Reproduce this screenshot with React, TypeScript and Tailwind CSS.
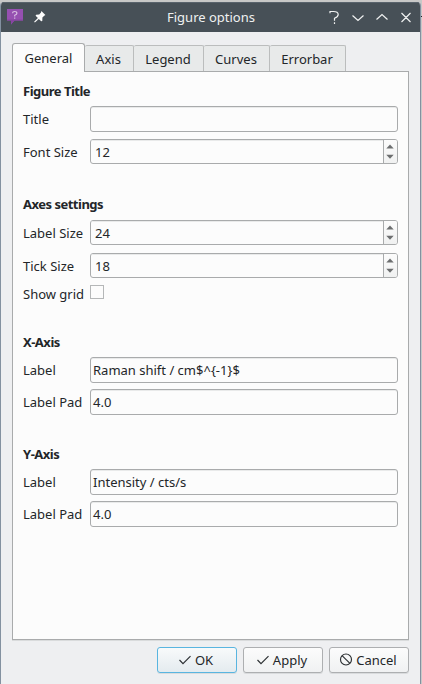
import React from 'react';

function Tab({ label, className }: { label: string; className: string }) {
  return (
    <div
      className={`flex h-[26px] items-center justify-center rounded-t-[2px] border-t border-r border-[#bbbdbd] bg-[#e8eaea] ${className}`}
    >
      {label}
    </div>
  );
}

function Heading({ children, className }: { children: string; className: string }) {
  return <h2 className={`h-[18px] leading-[18px] font-bold tracking-[-0.5px] ${className}`}>{children}</h2>;
}

function TextRow({ label, value, className }: { label: string; value: string; className: string }) {
  return (
    <div className={`flex h-[26px] items-center ${className}`}>
      <span className="w-[67px] shrink-0">{label}</span>
      <div className="flex h-full flex-1 items-center rounded-[3px] border border-[#a9abac] pl-[2px] shadow-[inset_0_1px_0_#e9eaea]">
        {value}
      </div>
    </div>
  );
}

function SpinRow({ label, value, className }: { label: string; value: string; className: string }) {
  return (
    <div className={`flex h-[25px] items-center ${className}`}>
      <span className="w-[67px] shrink-0">{label}</span>
      <div className="flex h-full flex-1 overflow-hidden rounded-[3px] border border-[#a9abac]">
        <div className="flex flex-1 items-center pl-[4px] shadow-[inset_0_1px_0_#e9eaea]">{value}</div>
        <div className="w-[14px] border-l border-[#a9abac] bg-linear-to-b from-[#fcfcfc] to-[#f0f1f1]">
          <svg width="13" height="23" viewBox="0 0 13 23" fill="#6c6e6f">
            <path d="M2.3 8.5 L6 4.6 L9.7 8.5Z" />
            <path d="M2.3 14.8 L6 18.7 L9.7 14.8Z" />
          </svg>
        </div>
      </div>
    </div>
  );
}

function Check() {
  return (
    <svg width="14" height="12" viewBox="0 0 14 12" fill="none" stroke="#2b2f32" strokeWidth="1.15">
      <path d="M1.5 6 L5 9.7 L12.5 2.2" />
    </svg>
  );
}

function Button({ label, icon, className }: { label: string; icon: React.ReactNode; className: string }) {
  return (
    <button
      className={`flex h-[26px] w-[80px] items-center justify-center gap-[3px] rounded-[3px] border bg-linear-to-b shadow-[0_1px_0_#d9dbdd] ${className}`}
    >
      {icon}
      <span>{label}</span>
    </button>
  );
}

export default function App() {
  return (
    <div className="h-[684px] w-[422px] overflow-hidden bg-[#c8c8c7] pt-[2px] font-['Noto_Sans',sans-serif] text-[13px] leading-[18px] text-[#232629]">
      <div className="flex h-[682px] w-[421px] flex-col overflow-hidden rounded-t-[4px] border-x border-[#8391a0] bg-[#eeeff1]">
        <header className="flex h-[30px] shrink-0 items-center border-t border-[#59636c] bg-[#475057] text-[#eff0f1]">
          <svg className="ml-[6px] shrink-0" width="17" height="17" viewBox="0 0 17 17">
            <path d="M0 0H16V11.500H7.500L4 15.500V11.500H0Z" fill="#9650b1" />
            <path d="M0 10.500H16V11.500H7.500L4 15.500V11.500H0Z" fill="#8744a2" />
            <path d="M5.500 4.200Q5.600 2.500 7.600 2.500Q9.900 2.500 9.900 4.300Q9.900 5.500 7.700 6.300V7.500M7.700 8.500V9.700" fill="none" stroke="#d6bce0" strokeWidth="1.2" />
          </svg>
          <svg className="ml-[10px] shrink-0" width="13" height="13" viewBox="0 0 13 13" fill="#fcfcfc">
            <path d="M7.400 0 L11.400 4 L10.200 4.800 L8.400 6.600 L8.300 9.900 L7.200 10.200 L4.800 7.900 L.9 11.600 L.1 10.800 L3.900 7 L1.600 4.800 L2.100 3.700 L5.200 3.600 L7 1.600Z" />
          </svg>
          <h1 className="ml-[120px] w-[100px] pb-[2px] whitespace-nowrap">Figure options</h1>
          <svg className="ml-[60px] shrink-0" width="88" height="16" viewBox="0 0 88 16" fill="none" stroke="#f0f1f1" strokeWidth="1.2">
            <path d="M3 3.2V1.500H6.500Q11.200 1.500 11.200 4.500Q11.200 6.800 7.500 8.200V10.800M7.500 12.300V14" />
            <path d="M25.5 5.500L31 10.500L36.500 5.500M49.500 9.500L55 4.500L60.500 9.500M74.500 3L83.500 12M83.500 3L74.500 12" />
          </svg>
        </header>

        <main className="flex flex-1 flex-col px-[11px]">
          <nav className="z-10 mt-[11px] -mb-px flex h-[29px] shrink-0 items-end">
            <div className="flex h-[29px] w-[73px] items-center justify-center rounded-t-[3px] border border-b-0 border-[#a9abac] bg-[#fcfcfc]">
              General
            </div>
            <Tab label="Axis" className="mb-px w-[49px] pr-px" />
            <Tab label="Legend" className="mb-px w-[70px] pr-px" />
            <Tab label="Curves" className="mb-px w-[66px] pr-px" />
            <Tab label="Errorbar" className="mb-px w-[76px] pr-px" />
          </nav>

          <section className="h-[569px] shrink-0 border border-[#a9abac] bg-[#fcfcfc] px-[10px] shadow-[0_1px_0_#d9dbdc]">
            <Heading className="mt-[10px]">Figure Title</Heading>
            <TextRow label="Title" value="" className="mt-[6px]" />
            <SpinRow label="Font Size" value="12" className="mt-[7px]" />

            <Heading className="mt-[31px]">Axes settings</Heading>
            <SpinRow label="Label Size" value="24" className="mt-[7px]" />
            <SpinRow label="Tick Size" value="18" className="mt-[8px]" />
            <div className="mt-[7px] flex h-[18px]">
              <span className="w-[67px]">Show grid</span>
              <span className="h-[14px] w-[14px] border border-[#b5b7b8]" />
            </div>

            <Heading className="mt-[30px]">X-Axis</Heading>
            <TextRow label="Label" value="Raman shift / cm$^{-1}$" className="mt-[6px]" />
            <TextRow label="Label Pad" value="4.0" className="mt-[6px]" />

            <Heading className="mt-[30px]">Y-Axis</Heading>
            <TextRow label="Label" value="Intensity / cts/s" className="mt-[6px]" />
            <TextRow label="Label Pad" value="4.0" className="mt-[6px]" />
          </section>

          <footer className="mt-[7px] flex justify-end gap-[6px]">
            <Button label="OK" icon={<Check />} className="border-[#59b5e0] from-[#f8fafb] to-[#e4ebef] pr-[3px]" />
            <Button label="Apply" icon={<Check />} className="border-[#adafb1] from-[#fcfcfc] to-[#f0f1f2] pr-[3px]" />
            <Button
              label="Cancel"
              icon={
                <svg width="14" height="14" viewBox="0 0 14 14" fill="none" stroke="#2b2f32" strokeWidth="1.15">
                  <circle cx="7" cy="6.5" r="5.5" />
                  <path d="M3.100 2.600L10.900 10.400" />
                </svg>
              }
              className="border-[#adafb1] from-[#fcfcfc] to-[#f0f1f2] pr-[2px]"
            />
          </footer>
        </main>
      </div>
      <div className="absolute top-[16px] left-[421px] h-px w-px bg-[#232629]" />
    </div>
  );
}
